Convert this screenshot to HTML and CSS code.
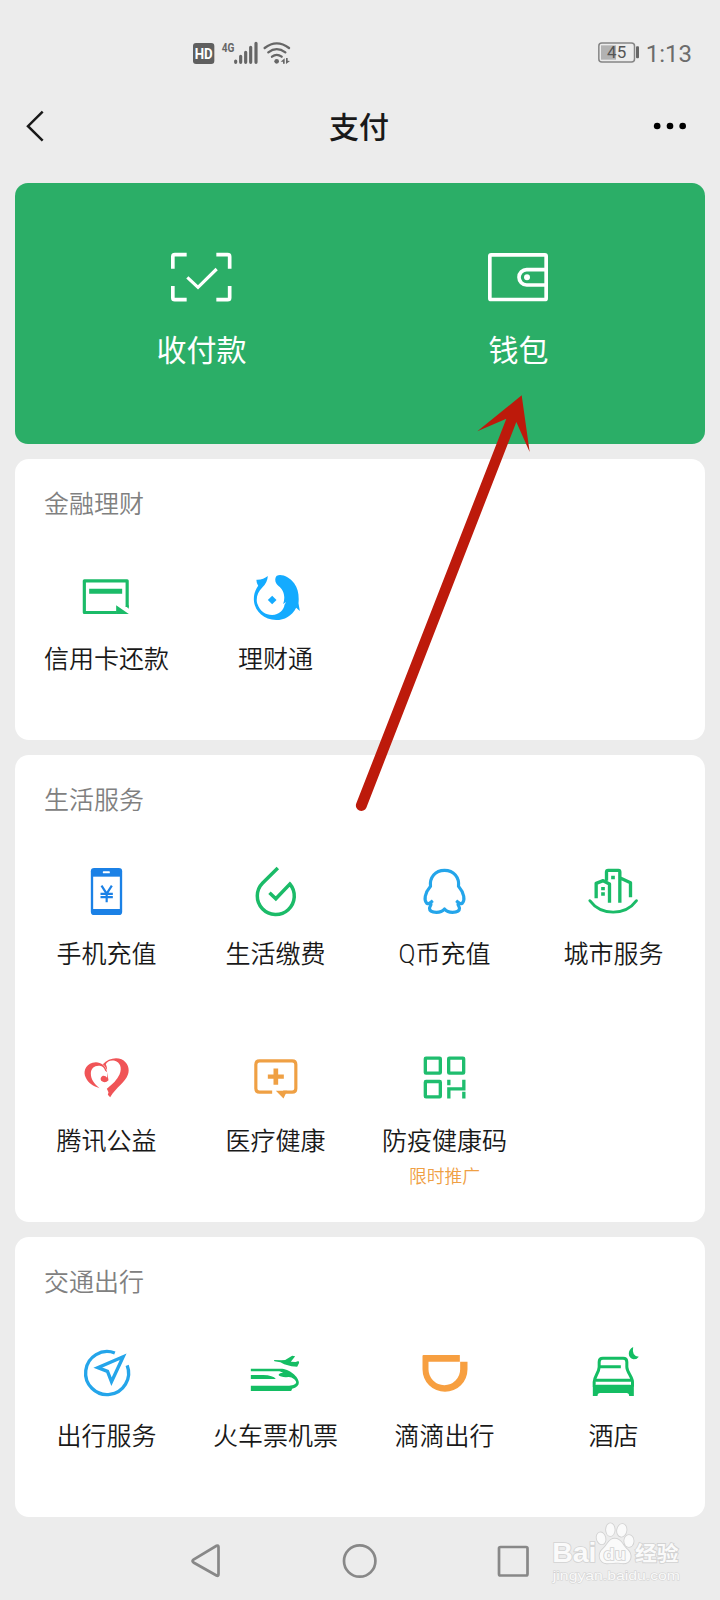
FILE: index.html
```html
<!DOCTYPE html>
<html lang="zh-CN">
<head>
<meta charset="utf-8">
<title>支付</title>
<link rel="stylesheet" href="styles.css">
</head>
<body>
<div class="screen">
  <div class="status">
    <svg class="status-left" viewBox="570 54 315 90">
      <rect x="579" y="69" width="64" height="63" rx="9" fill="#5f5f5f"/>
      <text class="hd" x="611" y="116" textLength="54" lengthAdjust="spacingAndGlyphs">HD</text>
      <text class="net" x="665" y="95" textLength="38" lengthAdjust="spacingAndGlyphs">4G</text>
      <path d="M707 123v4M722 109v18M737 97v30M752 82v45M768 70v57" stroke="#666" stroke-width="9.500" stroke-linecap="round"/>
      <path d="M794 84Q830 56 867 84M805 97Q830 78 856 97M816 110Q830 99 845 110" fill="none" stroke="#666" stroke-width="7" stroke-linecap="round"/>
      <circle cx="830" cy="124" r="7" fill="#666"/>
      <path d="M842 125l12-10v16h-5v-6zM870 123l-12 9v-18h5v8z" fill="#666"/>
    </svg>
    <div class="status-right">
      <svg class="battery" viewBox="714 68 126 63">
        <rect x="716.5" y="71" width="107" height="57" rx="9" fill="none" stroke="#858585" stroke-width="4.5"/>
        <rect x="723" y="78" width="45" height="43" fill="#b2b2b2"/>
        <rect x="828" y="81" width="9" height="36" rx="3" fill="#666"/>
        <text class="level" x="770" y="117">45</text>
      </svg>
      <span class="clock">1:13</span>
    </div>
  </div>

  <header class="header">
    <svg class="back" viewBox="75 264 60 102"><path d="M128 272L84 315.500L128 359" fill="none" stroke="#191919" stroke-width="7.500"/></svg>
    <h1 class="title">支付</h1>
    <svg class="more" viewBox="879 302 102 30"><circle cx="891.500" cy="317" r="10"/><circle cx="930" cy="317" r="10"/><circle cx="968" cy="317" r="10"/></svg>
  </header>

  <main class="cards">
    <section class="hero">
      <div class="hero-item">
        <svg class="hero-icon" viewBox="78 51 216 180" fill="none" stroke="#fff" stroke-width="11">
          <path d="M98.500 116V80q0-6 6-6H140M229 74h34q6 0 6 6V116M98.500 168v35q0 6 6 6H140M229 209h34q6 0 6-6V168"/>
          <path d="M142 142L174 172L230 117" stroke-width="9.500"/>
        </svg>
        <span class="hero-label">收付款</span>
      </div>
      <div class="hero-item">
        <svg class="hero-icon" viewBox="1029 51 216 180" fill="none" stroke="#fff" stroke-width="11">
          <rect x="1049.500" y="74.500" width="169" height="134" rx="4"/>
          <path d="M1218 119H1160a23 23 0 0 0 0 46H1218"/>
          <circle cx="1161" cy="142" r="9" fill="#fff" stroke="none"/>
        </svg>
        <span class="hero-label">钱包</span>
      </div>
    </section>

    <section class="card">
      <h2 class="card-title">金融理财</h2>
      <div class="grid">
        <div class="item">
          <svg class="icon" viewBox="237.500 387 168 168">
            <path d="M382 501V422.500H253.500V517.500H351" fill="none" stroke="#1bbb68" stroke-width="9.500" stroke-linejoin="round"/>
            <path d="M268 446h99v15h-99zM349 496L387 522H349z" fill="#1bbb68"/>
            <path d="M377 498l10-2v10z" fill="#1bbb68"/>
          </svg>
          <span class="label">信用卡还款</span>
        </div>
        <div class="item">
          <svg class="icon" viewBox="744.500 387 168 168" fill="#14abff">
            <path d="M770 419Q790 420 804 408Q803 427 788 442C773 456 768 475 772 490C781 516 797 525 817 525C838 524 852 510 854 494L859 486L850 492C858 470 851 448 836 438C824 429 824 414 831 407C846 401 869 411 883 430C895 446 898 466 896 490L900 513L889 503C876 528 854 540 829 540C790 540 762 511 762 478C762 460 768 447 775 437Q769 428 770 419Z"/>
            <path d="M817 467l13 13-13 13-13-13z"/>
          </svg>
          <span class="label">理财通</span>
        </div>
      </div>
    </section>

    <section class="card">
      <h2 class="card-title">生活服务</h2>
      <div class="grid">
        <div class="item">
          <svg class="icon" viewBox="237.500 345 168 168">
            <rect x="273" y="354" width="94" height="141" rx="10" fill="#1b81e6"/>
            <path d="M280 380h80v97h-80z" fill="#fff"/>
            <rect x="309" y="364" width="21" height="6" rx="2" fill="#fff"/>
            <path d="M305 407L320.500 431L336 407M320.500 429V457M302 431.500H339M302 441.500H339" fill="none" stroke="#1b81e6" stroke-width="6.500"/>
          </svg>
          <span class="label">手机充值</span>
        </div>
        <div class="item">
          <svg class="icon" viewBox="744.500 345 168 168">
            <path d="M834 354L788.500 399A55.500 55.500 0 1 0 870 402L828 446L809 428" fill="none" stroke="#1bbb68" stroke-width="10.500"/>
          </svg>
          <span class="label">生活缴费</span>
        </div>
        <div class="item">
          <svg class="icon" viewBox="171.500 75 168 168" fill="none" stroke="#24a5ea" stroke-width="9.500" stroke-linejoin="round">
            <path d="M219 182L211 188Q206 193 201 190C192 181 194 160 212 139C209 112 226 91 254 91C282 91 299 112 296 139C314 160 316 181 307 190Q302 193 297 188L289 182M211 188C218 194 209 198 209 205C209 214 219 217 230 217C241 217 249 213 254 207C259 213 267 217 278 217C289 217 299 214 299 205C299 198 290 194 297 188"/>
          </svg>
          <span class="label">Q币充值</span>
        </div>
        <div class="item">
          <svg class="icon" viewBox="678.500 75 168 168" fill="none" stroke="#1bbb68" stroke-width="10">
            <path d="M709 175V130L730 122L749 132V188M740 122V96Q740 91 745 91H776Q780 91 780 96V188M783 115L812 128V172" stroke-linejoin="round"/>
            <path d="M690 182C724 228 796 228 830 182" stroke-width="8.500" stroke-linecap="round"/>
            <path d="M754 107h11v11h-11zM724 141h11v10h-11zM724 157h11v10h-11z" fill="#1bbb68" stroke="none"/>
          </svg>
          <span class="label">城市服务</span>
        </div>
        <div class="item">
          <svg class="icon" viewBox="237.500 64.500 168 168" fill="#f05457">
            <path d="M322 128C317 105 297 94 278 100C256 107 249 128 258 145C266 162 280 170 299 176C284 163 273 150 273 132C273 116 285 107 300 109Q312 111 316 124Z"/>
            <path d="M309 104C323 87 348 82 365 89C384 98 391 119 384 136C376 158 350 173 331 203L324 196L326 188L321 178C338 164 352 151 359 135C368 114 360 99 345 94C332 91 322 96 318 104Q322 112 322 122Q316 108 309 104Z"/>
            <path d="M322 128L326 152Q316 163 304 154Q299 145 309 139Q317 138 322 145Z"/>
          </svg>
          <span class="label">腾讯公益</span>
        </div>
        <div class="item">
          <svg class="icon" viewBox="744.500 64.500 168 168">
            <path d="M817 188H779Q768 188 768 177V105Q768 94 779 94H877Q888 94 888 105V177Q888 188 877 188H850" fill="none" stroke="#efa044" stroke-width="9.500"/>
            <path d="M821 117h14v18h17v13h-17v18h-14v-18h-17v-13h17zM828 184H862L851 207z" fill="#efa044"/>
          </svg>
          <span class="label">医疗健康</span>
        </div>
        <div class="item">
          <svg class="icon" viewBox="171.500 64.500 168 168" fill="none" stroke="#1fbd6e" stroke-width="10">
            <rect x="196.500" y="86" width="45" height="45" rx="2"/><rect x="266.500" y="86" width="45" height="45" rx="2"/><rect x="196.500" y="156" width="45" height="46" rx="2"/>
            <path d="M267 151V167M267 207V178H312V151M312 187V207"/>
          </svg>
          <span class="label">防疫健康码</span>
          <span class="promo">限时推广</span>
        </div>
      </div>
    </section>

    <section class="card">
      <h2 class="card-title">交通出行</h2>
      <div class="grid">
        <div class="item">
          <svg class="icon" viewBox="237.500 321 168 168" fill="none" stroke="#24a5ea" stroke-width="10">
            <path d="M345 339A64.500 64.500 0 1 0 382 376"/>
            <path d="M370 350L294 383L323 394L335 425Z"/>
          </svg>
          <span class="label">出行服务</span>
        </div>
        <div class="item">
          <svg class="icon" viewBox="744.500 321 168 168" fill="#14bd63">
            <path d="M753 386H842C868 386 897 410 897 428Q897 440 877 446L874 453H753V437H868C881 437 889 432 889 427C889 421 878 411 867 411Q843 413 836 405Q839 398 850 398L839 394H753Z"/>
            <path d="M753 405H790Q820 406 828 417H753zM822 360L844 361L856 360L877 347L886 349L873 365L887 366L896 363L898 368L892 380L875 379L853 373L842 367L824 364Z"/>
          </svg>
          <span class="label">火车票机票</span>
        </div>
        <div class="item">
          <svg class="icon" viewBox="171.500 81 168 168">
            <path fill="#f79f40" fill-rule="evenodd" d="M191 105H300V125H323V148A67.500 67.500 0 0 1 188 148V108Q188 105 191 105ZM206 125V148A47.500 47.500 0 0 0 301 148V125Z"/>
          </svg>
          <span class="label">滴滴出行</span>
        </div>
        <div class="item">
          <svg class="icon" viewBox="678.500 81 168 168">
            <path d="M703 200V186C703 170 718 157 718 141V126Q718 115 729 115H790Q801 115 801 126V141C801 157 818 170 818 186V200M720 140H783M708 181H813" fill="none" stroke="#14bd63" stroke-width="9"/>
            <path d="M699 199Q702 194 710 194H811Q819 194 822 199V228H808Q808 219 800 219H721Q713 219 713 228H699ZM820 81C802 90 803 114 821 118Q832 118 837 110Q815 109 820 81Z" fill="#14bd63"/>
          </svg>
          <span class="label">酒店</span>
        </div>
      </div>
    </section>
  </main>

  <nav class="sysnav">
    <svg class="key" viewBox="0 0 40 40"><path d="M32.500 6V33Q32.500 35.500 30.500 34.500L7.500 21.500Q5.500 20 7.500 18.500L30.500 4.800Q32.500 4 32.500 6Z"/></svg>
    <svg class="key" viewBox="0 0 40 40"><circle cx="20.700" cy="20" r="15.700"/></svg>
    <svg class="key" viewBox="0 0 40 40"><rect x="6" y="6" width="28.500" height="28.500" rx="1.500"/></svg>
  </nav>

  <svg class="arrow" viewBox="0 0 660 1350" fill="#bd1a0b">
    <path d="M545 46L569 216L529 126L79 1283A16 16 0 0 1 49 1270L499 116L412 154Z"/>
  </svg>

  <svg class="watermark" viewBox="1092 56 378 202" preserveAspectRatio="none">
    <g class="mark">
      <ellipse cx="1235" cy="114" rx="12" ry="18" transform="rotate(-12 1235 114)"/>
      <ellipse cx="1261" cy="88" rx="12" ry="19"/>
      <ellipse cx="1293" cy="90" rx="13" ry="19" transform="rotate(8 1293 90)"/>
      <ellipse cx="1313" cy="122" rx="13" ry="18"/>
      <path d="M1273 115C1256 115 1253 135 1241 145C1224 160 1230 187 1250 189C1266 190 1282 184 1296 189C1321 189 1323 162 1309 148C1296 137 1292 115 1273 115Z"/>
      <text class="bai" x="1098" y="186" textLength="124" lengthAdjust="spacingAndGlyphs">Bai</text>
      <text class="du" x="1242" y="180" textLength="62" lengthAdjust="spacingAndGlyphs">du</text>
      <text class="jingyan" x="1330" y="182" textLength="122" lengthAdjust="spacingAndGlyphs">经验</text>
      <text class="url" x="1100" y="238" textLength="356" lengthAdjust="spacingAndGlyphs">jingyan.baidu.com</text>
    </g>
  </svg>
</div>
</body>
</html>
```

FILE: styles.css
```css
* { box-sizing: border-box; }

body {
  margin: 0;
  background: #ececec;
  font-family: Roboto, "Noto Sans CJK SC", sans-serif;
  color: #191919;
}

.screen {
  position: relative;
  width: 720px;
  height: 1600px;
  overflow: hidden;
}

svg { display: block; flex: none; }

/* Status bar */
.status {
  display: flex;
  justify-content: space-between;
  height: 84px;
  padding: 38px 28px 0 190px;
}
.status-left { width: 105px; height: 30px; }
.hd { font: 700 42px Roboto, sans-serif; fill: #fff; text-anchor: middle; }
.net { font: 700 40px Roboto, sans-serif; fill: #666; }
.level { font: 400 51px Roboto, sans-serif; fill: #555; text-anchor: middle; }
.status-right { display: flex; gap: 6px; padding-top: 4px; }
.battery { width: 42px; height: 21px; }
.clock { font-size: 24px; line-height: 25px; color: #6c6c6c; }

/* Title bar */
.header {
  display: flex;
  align-items: center;
  justify-content: space-between;
  height: 84px;
  padding: 0 33px 0 25px;
}
.back { width: 20px; height: 34px; }
.title {
  margin: 3px 0 0 20px;
  font-size: 30px;
  font-weight: 500;
  line-height: 40px;
}
.more { width: 34px; height: 10px; }

/* Cards */
.cards {
  display: flex;
  flex-direction: column;
  gap: 15px;
  padding: 15px 15px 0;
}
.hero {
  display: grid;
  grid-template-columns: 1fr 1fr;
  height: 261px;
  padding: 64px 28px 0;
  border-radius: 13px;
  background: #2bae67;
  color: #fff;
}
.hero-item { display: flex; flex-direction: column; align-items: center; gap: 24px; }
.hero-icon { width: 72px; height: 60px; }
.hero-label { font-size: 30px; line-height: 40px; }

.card {
  padding: 0 7px;
  border-radius: 14px;
  background: #fff;
}
.card-title {
  height: 94px;
  margin: 0;
  padding: 29px 0 0 22px;
  font-size: 25px;
  font-weight: 350;
  line-height: 34px;
  color: #808080;
}
.grid {
  display: grid;
  grid-template-columns: repeat(4, 1fr);
  grid-auto-rows: 186.5px;
}
.item {
  display: flex;
  flex-direction: column;
  align-items: center;
  padding-top: 16px;
}
.icon { width: 56px; height: 56px; }
.label {
  margin-top: 18.5px;
  font-size: 25px;
  font-weight: 350;
  line-height: 32px;
  white-space: nowrap;
}
.promo {
  margin-top: 7px;
  font-size: 17.8px;
  font-weight: 350;
  line-height: 24px;
  color: #efa044;
}

/* System navigation */
.sysnav {
  display: flex;
  justify-content: space-between;
  padding: 24px 187.500px 0 186px;
}
.key {
  width: 40px;
  height: 40px;
  fill: none;
  stroke: #888;
  stroke-width: 2.700;
}

/* Overlays */
.arrow {
  position: absolute;
  left: 340px;
  top: 380px;
  width: 220px;
  height: 450px;
}
.watermark {
  position: absolute;
  left: 550px;
  top: 1518.7px;
  width: 135px;
  height: 67.3px;
}
.mark { fill: #fafafa; stroke: #d2d2d2; stroke-width: 5; paint-order: stroke; }
.bai { font: 700 84px "Liberation Sans", sans-serif; }
.du { font: 700 52px "Liberation Sans", sans-serif; }
.jingyan { font: 700 62px "Noto Sans CJK SC", sans-serif; }
.url { font: 400 41px "Liberation Sans", sans-serif; stroke-width: 3; }
```
